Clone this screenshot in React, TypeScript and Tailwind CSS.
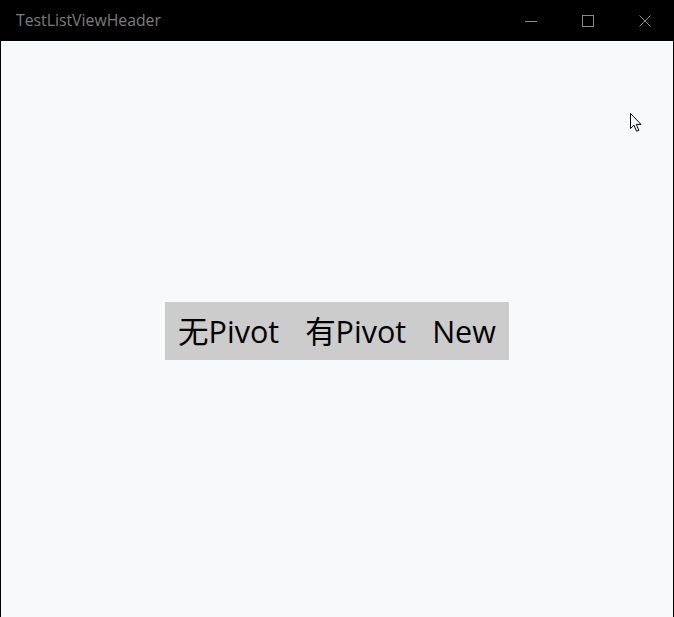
const tabs = ["无Pivot", "有Pivot", "New"];

function Cursor() {
  return (
    <svg
      className="absolute left-[630px] top-[113px]"
      width="12"
      height="20"
      viewBox="0 0 12 20"
    >
      <path
        d="M0.5 0.5 L0.5 15.5 L4 12.2 L6.6 18.3 L8.8 17.3 L6.3 11.4 L11 11.4 Z"
        fill="#ffffff"
        stroke="#000000"
        strokeWidth="1"
        strokeLinejoin="miter"
      />
    </svg>
  );
}

export default function App() {
  return (
    <div className="relative flex h-[617px] w-[674px] flex-col bg-black">
      <div className="flex h-[41px] items-center justify-between">
        <span className="pl-4 font-['Open_Sans','Noto_Sans',sans-serif] text-[15.8px] text-[#7d7d7d]">
          TestListViewHeader
        </span>
        <div className="flex h-full pr-[1px]">
          <div className="flex w-[57px] items-center justify-center">
            <svg width="12" height="12" viewBox="0 0 12 12">
              <path d="M0 6.5 H12" stroke="#8a8a8a" strokeWidth="1" />
            </svg>
          </div>
          <div className="flex w-[57px] items-center justify-center">
            <svg width="12" height="12" viewBox="0 0 12 12">
              <rect x="0.5" y="0.5" width="11" height="11" fill="none" stroke="#8a8a8a" strokeWidth="1" />
            </svg>
          </div>
          <div className="flex w-[57px] items-center justify-center">
            <svg width="12" height="12" viewBox="0 0 12 12">
              <path d="M0.5 0.5 L11.5 11.5 M11.5 0.5 L0.5 11.5" stroke="#8a8a8a" strokeWidth="1" />
            </svg>
          </div>
        </div>
      </div>
      <div className="mx-[1px] flex flex-1 items-center justify-center bg-[#f8f9fa]">
        <div className="mt-[4px] flex h-[58px] items-center bg-[#cccccc]">
          {tabs.map((t) => (
            <div
              key={t}
              className="px-[13px] font-['Open_Sans','Noto_Sans_CJK_SC',sans-serif] text-[30.5px] leading-none text-black"
            >
              {t}
            </div>
          ))}
        </div>
      </div>
      <Cursor />
    </div>
  );
}
